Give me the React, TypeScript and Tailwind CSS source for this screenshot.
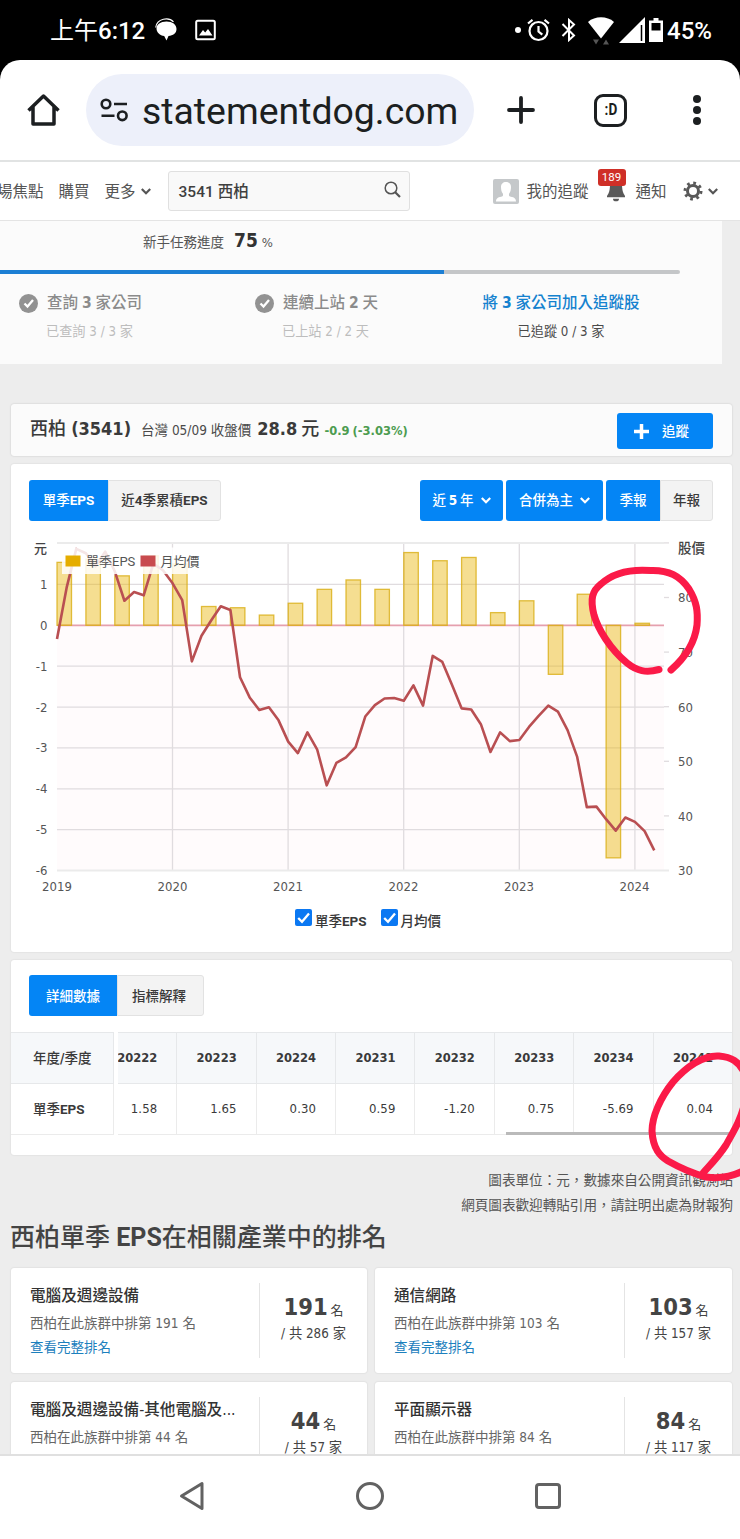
import { clsx } from "clsx";
import type { ReactNode } from "react";

type Quarter = { name: string; value: string };
type Ranking = { title: string; rank: number; total: number };

const ROBOTO = "font-['Roboto','Noto_Sans_CJK_TC',sans-serif] [font-stretch:normal]";

const QUARTERS: Quarter[] = [
  { name: "20222", value: "1.58" },
  { name: "20223", value: "1.65" },
  { name: "20224", value: "0.30" },
  { name: "20231", value: "0.59" },
  { name: "20232", value: "-1.20" },
  { name: "20233", value: "0.75" },
  { name: "20234", value: "-5.69" },
  { name: "20241", value: "0.04" }
];

const RANKINGS: Ranking[] = [
  { title: "電腦及週邊設備", rank: 191, total: 286 },
  { title: "通信網路", rank: 103, total: 157 },
  { title: "電腦及週邊設備-其他電腦及...", rank: 44, total: 57 },
  { title: "平面顯示器", rank: 84, total: 117 }
];

// Quarterly EPS, 2019Q1 to 2024Q1
const EPS = [
  1.54, 1.62, 1.21, 1.7, 1.5, 0.46, 0.43, 0.25, 0.54, 0.88, 1.11, 0.88, 1.78, 1.58, 1.66, 0.31, 0.6, -1.2, 0.76,
  -5.69, 0.05
];

// Monthly average price
const PRICE = [
  72.4, 81.8, 88.9, 88.1, 85.7, 88.4, 84.8, 79.4, 81, 80.4, 86.2, 85, 82.6, 79.5, 68.3, 73, 75.8, 78.4, 77.7, 65.4,
  61.7, 59.4, 59.9, 57.5, 53.6, 51.5, 55.3, 52.2, 45.6, 49.7, 50.7, 52.6, 58.2, 60.3, 61.5, 61.6, 61.1, 63.9, 60.2,
  69.3, 68.2, 64, 59.7, 59.5, 56.8, 51.7, 55.3, 53.7, 53.9, 56.3, 58.3, 60.2, 59.1, 55.7, 50.8, 41.6, 41.7, 39.4,
  37.3, 39.7, 38.9, 37.2, 33.7
];

const PLOT = { left: 46, right: 653, top: 13, bottom: 340.5, zero: 95.3 };
const EPS_STEP = 40.87;
const PRICE_STEP = 5.46;
const QUARTER_STEP = 28.9;
const YEARS = [2019, 2020, 2021, 2022, 2023, 2024];

const epsY = (value: number) => PLOT.zero - value * EPS_STEP;
const priceY = (value: number) => PLOT.bottom - (value - 30) * PRICE_STEP;

const StatusBar = () => (
  <div className={clsx("flex h-[60px] shrink-0 items-center bg-black pl-[50px] pr-[28px] text-[24px] font-medium text-white", ROBOTO)}>
    <span className="pt-[2px] whitespace-nowrap">
      <span className="font-normal">上午</span>6:12
    </span>
    <svg className="ml-[10px] h-[24px] w-[22px]" viewBox="0 0 22 24">
      <path d="M.700 9.500C2 0 14-1 18.500 3.800" stroke="#fff" strokeWidth="1.2" fill="none" />
      <path
        d="M11.500 3.500C17.500 3.500 21.500 6.500 21.500 11S18 17.600 13.500 18L11.500 22.500 9.200 18C5 17.500 1.500 14.500 1.500 10.500S5.500 3.500 11.500 3.500Z"
        fill="#fff"
      />
    </svg>
    <svg className="ml-[18px] h-[22px] w-[22px]" viewBox="0 0 22 22">
      <rect x="1.2" y="1.700" width="18.600" height="18.600" rx="1.500" fill="none" stroke="#fff" strokeWidth="2" />
      <path d="M4 16.500 8 11 10.200 13.500 13 10 17.500 16.500Z" fill="#fff" />
    </svg>
    <div className="ml-auto flex items-center">
      <span className="h-[6px] w-[6px] rounded-full bg-white" />
      <svg className="ml-[6px] h-[24px] w-[23px]" viewBox="0 0 23 24" fill="none" stroke="#fff" strokeWidth="2.2">
        <circle cx="11.500" cy="13" r="9" />
        <path d="M11.500 8v5.500l3.800 3.200M1 5.500 5.500 1.800M22 5.500 17.500 1.800" />
      </svg>
      <svg className="ml-[11px] h-[24px] w-[16px]" viewBox="0 0 16 24" fill="none" stroke="#fff" strokeWidth="2">
        <path d="M1.500 6 13 17.500 8 22V2l5 4.500L1.500 18" />
      </svg>
      <svg className="ml-[11px] h-[29px] w-[26px]" viewBox="0 0 26 29">
        <path d="M0 6C7-.2 19-.2 26 6L13 22.500Z" fill="#fff" />
        <path d="M5 23.500h6l-3 5zM15 28.500h6l-3-5z" fill="#555" />
      </svg>
      <svg className="ml-[5px] h-[26px] w-[26px]" viewBox="0 0 26 26">
        <path d="M26 0V26H0Z" fill="#fff" />
        <path d="M22.500 8v16" stroke="#000" strokeWidth="1.500" />
      </svg>
      <svg className="ml-[4px] h-[24px] w-[14px]" viewBox="0 0 14 24">
        <path d="M4.500 0h5v2.500H14V24H0V2.500h4.500z" fill="#fff" />
        <path d="M2.500 5h9v7.500h-9z" fill="#000" />
      </svg>
      <span className="ml-[4px] pt-[2px]">45%</span>
    </div>
  </div>
);

const BrowserBar = () => (
  <div className="shrink-0 bg-black">
    <div className={clsx("flex h-[102px] items-center rounded-t-[20px] border-b-2 border-[#e1e3e3] bg-white text-[#1c1f21]", ROBOTO)}>
      <svg className="ml-[27px] h-[34px] w-[33px]" viewBox="0 0 33 34" fill="none" stroke="currentColor" strokeWidth="3.500">
        <path d="M1.500 17.500 16.500 3 31.500 17.500M6 14v17h21V14" strokeLinejoin="round" />
      </svg>
      <div className="ml-[26px] flex h-[72px] w-[388px] items-center rounded-full bg-[#edf0fa] pl-[14px]">
        <svg className="h-[24px] w-[28px]" viewBox="0 0 28 24" fill="none" stroke="currentColor" strokeWidth="2.600">
          <circle cx="6" cy="6" r="4.300" />
          <circle cx="22.300" cy="17.800" r="4.300" />
          <path d="M14 6h13M1.500 17.800h13" />
        </svg>
        <span className="mt-[4px] ml-[14px] whitespace-nowrap text-[37.400px] leading-none">statementdog.com</span>
      </div>
      <svg className="ml-[33px] h-[28px] w-[28px]" viewBox="0 0 28 28" stroke="currentColor" strokeWidth="3.800" strokeLinecap="round">
        <path d="M14 2v24M2 14h24" />
      </svg>
      <div className="ml-[59px] flex h-[33px] w-[33px] items-center justify-center rounded-[9px] border-[3.500px] border-current text-[17px] font-bold">
        <span className="scale-x-80">:D</span>
      </div>
      <div className="ml-[66px] flex flex-col gap-[3.500px]">
        <span className="h-[7.500px] w-[7.500px] rounded-full bg-current" />
        <span className="h-[7.500px] w-[7.500px] rounded-full bg-current" />
        <span className="h-[7.500px] w-[7.500px] rounded-full bg-current" />
      </div>
    </div>
  </div>
);

const Chevron = ({ className }: { className?: string }) => (
  <svg className={clsx("h-[7px] w-[10px]", className)} viewBox="0 0 10 7" fill="none" stroke="currentColor" strokeWidth="2.200">
    <path d="M.800 1 5 5.200 9.200 1" />
  </svg>
);

const SiteNav = () => (
  <nav className="flex h-[59px] shrink-0 items-center border-b border-[#e4e4e4] bg-white text-[15.500px] whitespace-nowrap text-[#555]">
    <span className="mt-[3px] -ml-[3px]">場焦點</span>
    <span className="mt-[3px] ml-[15px]">購買</span>
    <span className="mt-[3px] ml-[15px]">更多</span>
    <Chevron className="ml-[5px]" />
    <div className={clsx("ml-[17px] flex h-[40px] w-[242px] items-center justify-between rounded-[3px] border border-[#e0e0e0] bg-[#f9f9f9] pl-[10px] pr-[8px] font-medium text-[#3f3f3f]", ROBOTO)}>
      <span className="mt-[3px]">3541 西柏</span>
      <svg className="-mt-[3px] h-[17px] w-[17px]" viewBox="0 0 17 17" fill="none" stroke="#555" strokeWidth="1.500">
        <circle cx="7" cy="7" r="5.800" />
        <path d="m11 11 5 5" strokeWidth="2.200" />
      </svg>
    </div>
    <svg className="ml-[83px] h-[25px] w-[26px]" viewBox="0 0 26 25">
      <rect width="26" height="25" rx="2" fill="#c5c8ca" />
      <path d="M3 22.500c0-4 3-4.200 6.500-5.300.6-.3.700-1.800.3-2.700C8.500 13 8 10.500 8 8c0-3 2-5 5-5s5 2 5 5c0 2.500-.500 5-1.800 6.500-.4.900-.3 2.400.3 2.700 3.500 1.100 6.500 1.300 6.500 5.300z" fill="#fff" />
    </svg>
    <span className="mt-[3px] ml-[8px]">我的追蹤</span>
    <div className="relative ml-[17px] h-[26px] w-[20px]">
      <svg className="absolute top-[4px] left-0 h-[20px] w-[20px]" viewBox="0 0 20 20" fill="#595959">
        <path d="M4 2h12c0 6 1 9 3 12v1.300H1V14C3 11 4 8 4 2zM7 16.700h6a3 2.600 0 0 1-6 0z" />
      </svg>
      <span className={clsx("absolute -top-[9px] -left-[8px] flex h-[17px] w-[28px] items-center justify-center rounded-[3px] bg-[#cf2f27] text-[11.500px] text-white", ROBOTO)}>
        189
      </span>
    </div>
    <span className="mt-[3px] ml-[10px]">通知</span>
    <svg className="ml-[16px] h-[20px] w-[20px]" viewBox="0 0 20 20" fill="none" stroke="#595959">
      <circle cx="10" cy="10" r="5.500" strokeWidth="3" />
      <circle cx="10" cy="10" r="8" strokeWidth="3" strokeDasharray="2.700 3.583" />
    </svg>
    <Chevron className="ml-[5px]" />
  </nav>
);

const DoneTask = ({ title, note }: { title: ReactNode; note: string }) => (
  <div className="w-[236px]">
    <div className="flex items-center text-[15.500px] leading-[22px] font-medium [word-spacing:-0.500px] text-[#8b8b8b]">
      <svg className="mt-[1px] mr-[9px] h-[19px] w-[19px]" viewBox="0 0 19 19">
        <circle cx="9.500" cy="9.500" r="9.500" fill="#929292" />
        <path d="m5.500 9.500 3 3 5.500-6.500" fill="none" stroke="#fff" strokeWidth="2.300" />
      </svg>
      {title}
    </div>
    <div className="mt-[9px] ml-[27px] text-[13.200px] leading-[18px] text-[#bdbdbd]">{note}</div>
  </div>
);

const BeginnerProgress = () => (
  <section className="h-[143px] w-[722px] bg-[#fbfbfb]">
    <div className="flex h-[49px] items-baseline pt-[7px] pl-[143px] text-[13.500px] text-[#555]">
      新手任務進度
      <b className="ml-[10px] text-[19px] leading-[24px] text-[#333]">75</b>
      <span className="ml-[4px] text-[13px]">%</span>
    </div>
    <div className="h-[4px] w-[680px] rounded-r-full bg-[#c4c6c8]">
      <div className="h-full w-[444px] bg-[#1c7fd4]" />
    </div>
    <div className="flex pt-[18px] pl-[19px]">
      <DoneTask title={<span>查詢 <b>3</b> 家公司</span>} note="已查詢 3 / 3 家" />
      <DoneTask title={<span>連續上站 <b>2</b> 天</span>} note="已上站 2 / 2 天" />
      <div className="ml-[-48px] w-[236px] text-center whitespace-nowrap">
        <div className="text-[15.500px] leading-[22px] font-medium [word-spacing:-0.500px] text-[#1582cf]">
          將 <b>3</b> 家公司加入追蹤股
        </div>
        <div className="mt-[9px] text-[13.200px] leading-[18px] text-[#4a4a4a]">已追蹤 0 / 3 家</div>
      </div>
    </div>
  </section>
);

const StockHeader = () => (
  <section className="mt-[40px] flex h-[52px] w-[721px] items-center rounded-[3px] bg-[#fbfbfb] pr-[19px] pl-[19px] whitespace-nowrap text-[#3a3a3a] shadow-[0_0_2px_rgba(0,0,0,0.18)]">
    <div className="-mt-[4px] flex items-baseline">
      <span className="text-[18px] font-medium">
        西柏 <b>(3541)</b>
      </span>
      <span className="ml-[10px] text-[13.500px] text-[#4a4a4a]">台灣 05/09 收盤價</span>
      <span className="ml-[6px] text-[18px] font-medium [word-spacing:-1px]">
        <b>28.8</b> 元
      </span>
      <b className="ml-[5px] text-[12.800px] [word-spacing:-1px] text-[#4c9c50]">-0.9 (-3.03%)</b>
    </div>
    <button type="button" className="mt-[2px] ml-auto flex h-[36px] w-[96px] items-center rounded-[3px] bg-[#0485f5] pl-[17px] text-[13.500px] font-medium text-white">
      <svg className="mr-[13px] h-[15px] w-[15px]" viewBox="0 0 15 15" stroke="#fff" strokeWidth="3.500">
        <path d="M7.500 0v15M0 7.500h15" />
      </svg>
      追蹤
    </button>
  </section>
);

const Tab = ({ active, className, children }: { active?: boolean; className?: string; children: ReactNode }) => (
  <button
    type="button"
    className={clsx(
      "flex h-[41px] items-center justify-center pt-px text-[13.500px] font-medium whitespace-nowrap",
      active ? "bg-[#0485f5] text-white" : "border border-[#e2e2e2] bg-[#f3f3f3] text-[#3a3a3a]",
      className
    )}
  >
    {children}
  </button>
);

const EpsChart = () => (
  <svg className="block h-[370px] w-[721px]" viewBox="0 0 721 370">
    <rect x={PLOT.left} y={PLOT.zero} width={PLOT.right - PLOT.left} height={PLOT.bottom - PLOT.zero} fill="#fffbfc" />
    <g stroke="#e0dcdf" strokeWidth="1.300">
      {[1, -1, -2, -3, -4, -5].map((value) => (
        <path key={value} d={`M${PLOT.left} ${epsY(value)}H${PLOT.right}`} />
      ))}
      {YEARS.slice(1).map((year, i) => (
        <path key={year} d={`M${161.5 + i * 115.6} ${PLOT.top}V${PLOT.bottom}`} />
      ))}
      <path d={`M${PLOT.left} ${PLOT.top}H${PLOT.right}M${PLOT.left} ${PLOT.bottom}H${PLOT.right + 5}`} strokeWidth="2" stroke="#ebebeb" />
      {[40, 50, 60, 70, 80, 90].map((value) => (
        <path key={value} d={`M${PLOT.right} ${priceY(value)}h5`} />
      ))}
    </g>
    <path d={`M${PLOT.left} ${PLOT.zero}H${PLOT.right}`} stroke="#e5a0ae" strokeWidth="1.800" />
    <g fill="#e8b60c" fillOpacity="0.450" stroke="#d9ae14" strokeOpacity="0.800" strokeWidth="1.300">
      {EPS.map((value, i) => (
        <rect
          key={i}
          x={PLOT.left + i * QUARTER_STEP}
          y={Math.min(PLOT.zero, epsY(value))}
          width="14.500"
          height={Math.abs(value) * EPS_STEP}
        />
      ))}
    </g>
    <polyline
      points={PRICE.map((value, i) => `${PLOT.left + i * 9.633},${priceY(value)}`).join(" ")}
      fill="none"
      stroke="#b94f52"
      strokeWidth="2.600"
      strokeLinejoin="round"
    />
    <rect x="51" y="17.500" width="143" height="26.500" fill="#fff" fillOpacity="0.850" />
    <rect x="54.500" y="25.500" width="15" height="11" fill="#e5ad00" />
    <rect x="129.500" y="25.500" width="15" height="11" fill="#c84b4e" />
    <g className={ROBOTO} fontSize="13" fill="#555">
      <text x="75" y="36">單季EPS</text>
      <text x="149.500" y="36">月均價</text>
    </g>
    <g fontSize="13" fontWeight="500" fill="#444">
      <text x="23" y="23">元</text>
      <text x="667" y="23" fontSize="13.500">股價</text>
    </g>
    <g fontSize="13" fill="#555">
      {[1, 0, -1, -2, -3, -4, -5, -6].map((value) => (
        <text key={value} x="36.500" y={epsY(value) + 4.5} textAnchor="end">
          {value}
        </text>
      ))}
      {[30, 40, 50, 60, 70, 80].map((value) => (
        <text key={value} x="667" y={priceY(value) + 4.8}>
          {value}
        </text>
      ))}
      {YEARS.map((year, i) => (
        <text key={year} x={46 + i * 115.5} y="361.200" textAnchor="middle">
          {year}
        </text>
      ))}
    </g>
  </svg>
);

const SeriesToggle = ({ children }: { children: ReactNode }) => (
  <label className="flex items-end">
    <svg className="mr-[3px] mb-[5px] h-[17px] w-[17px]" viewBox="0 0 17 17">
      <rect width="17" height="17" rx="2" fill="#0b78f2" />
      <path d="m3.200 9 3.800 3.800L14 4.500" fill="none" stroke="#fff" strokeWidth="2.300" />
    </svg>
    {children}
  </label>
);

const ChartCard = () => (
  <section className="mt-[8px] flex h-[488px] w-[721px] flex-col rounded-[3px] bg-white pt-[15.500px] shadow-[0_0_2px_rgba(0,0,0,0.12)]">
    <div className="flex pr-[19px] pl-[18px]">
      <Tab active className={clsx("w-[79px] rounded-l-[3px]", ROBOTO)}>
        <span>單季<b>EPS</b></span>
      </Tab>
      <Tab className={clsx("w-[113px] rounded-r-[3px]", ROBOTO)}>
        <span>近<b>4</b>季累積<b>EPS</b></span>
      </Tab>
      <Tab active className="ml-auto w-[83px] rounded-[3px]">
        <span className="[word-spacing:-1px]">近 <b>5</b> 年</span>
        <Chevron className="ml-[7px]" />
      </Tab>
      <Tab active className="ml-[3px] w-[97px] rounded-[3px]">
        合併為主
        <Chevron className="ml-[7px]" />
      </Tab>
      <Tab active className="ml-[3px] w-[54px] rounded-l-[3px]">季報</Tab>
      <Tab className="w-[53px] rounded-r-[3px]">年報</Tab>
    </div>
    <div className="mt-[9.500px]">
      <EpsChart />
    </div>
    <div className={clsx("mt-[9px] flex justify-start gap-[14px] pl-[284px] text-[13.500px] leading-[20px] font-medium text-[#3a3a3a]", ROBOTO)}>
      <SeriesToggle><span>單季<b>EPS</b></span></SeriesToggle>
      <SeriesToggle>月均價</SeriesToggle>
    </div>
  </section>
);

const DetailTable = () => (
  <section className="mt-[8px] h-[195px] w-[721px] rounded-[3px] bg-white pt-[15px] shadow-[0_0_2px_rgba(0,0,0,0.12)]">
    <div className="flex pl-[18px]">
      <Tab active className="w-[88px] rounded-l-[3px]">詳細數據</Tab>
      <Tab className="w-[87px] rounded-r-[3px] pr-[3px]">指標解釋</Tab>
    </div>
    <div className="mt-[16px] flex gap-[4px] text-[13px] text-[#3a3a3a]">
      <div className="w-[103px] shrink-0 font-medium">
        <div className="flex h-[52px] items-center border-y border-r border-[#e6e8ea] bg-[#f6f8fa] pl-[22px] text-[13.500px]">
          <span>年度<b>/</b>季度</span>
        </div>
        <div className={clsx("flex h-[51px] items-center border-r border-b border-[#ebebeb] pl-[22px] text-[13.500px]", ROBOTO)}>
          <span>單季<b>EPS</b></span>
        </div>
      </div>
      <div className="relative flex min-w-0 flex-1 justify-end overflow-hidden">
        {QUARTERS.map((quarter, i) => (
          <div key={quarter.name} className={clsx("w-[79.400px] shrink-0", i > 0 && "[&>*]:border-l")}>
            <div className="flex h-[52px] items-center justify-end border-y border-[#e6e8ea] bg-[#f6f8fa] pr-[19px] text-[12.800px] font-bold">
              {quarter.name}
            </div>
            <div className="flex h-[51px] items-center justify-end border-b border-[#ebebeb] pr-[19px] tracking-[0.1px]">{quarter.value}</div>
          </div>
        ))}
        <span className="absolute right-0 bottom-0 h-[3px] w-[226px] bg-[#bababa]" />
      </div>
    </div>
  </section>
);

const RankingCard = ({ title, rank, total }: Ranking) => (
  <div className="flex h-[105px] items-center rounded-[3px] bg-white pl-[19px] text-[13.500px] shadow-[0_0_2px_rgba(0,0,0,0.14)]">
    <div className="flex-1 whitespace-nowrap text-[#666]">
      <div className="pt-[4px] text-[15.600px] leading-[24px] font-medium text-[#333]">{title}</div>
      <div className="mt-[3px] leading-[24px]">西柏在此族群中排第 {rank} 名</div>
      <div className="pb-[2px] leading-[24px] text-[#1c80bd]">查看完整排名</div>
    </div>
    <div className="h-[75px] w-[108px] border-l border-[#e4e4e4] pt-[10px] text-center text-[#444]">
      <div className="leading-[28px]">
        <b className="text-[23.500px]">{rank}</b> <span className="-ml-px text-[13px]">名</span>
      </div>
      <div className="-mt-[3px] text-[13.300px] leading-[24px]">/ 共 {total} 家</div>
    </div>
  </div>
);

const SystemNav = () => (
  <div className="flex h-[85px] shrink-0 items-center border-t-2 border-[#e0e0e0] bg-white pb-[4px] pl-[179px]">
    <svg className="h-[30px] w-[27px]" viewBox="0 0 27 30" fill="none" stroke="#626262" strokeWidth="3" strokeLinejoin="round">
      <path d="M23 2.500v25L2.500 15Z" />
    </svg>
    <span className="ml-[150px] h-[28px] w-[28px] rounded-full border-[3px] border-[#626262]" />
    <span className="ml-[151px] h-[26px] w-[26px] rounded-[4px] border-[3px] border-[#626262]" />
  </div>
);

// Red pen marks around the latest quarter
const PenMarks = () => (
  <svg className="pointer-events-none absolute inset-0 h-[1539px] w-[740px]" viewBox="0 0 740 1539" fill="none" stroke="#fb1a48" strokeWidth="7" strokeLinecap="round" strokeLinejoin="round">
    <path d="M659 669.500C646 673 637 671 627 663C610 649 598 629 594 615C590 599 592 591 601 584C614 572 632 569 651 570.500C669 570 680 576 689 589C697 602 698 612 697 625C695 642 687 656 671 670" />
    <path d="M745 1074C739 1061 731 1057 719 1056C703 1055 686 1067 673 1082C660 1098 652 1117 652 1131C653 1149 660 1156 668 1161C682 1169 695 1174 706 1177C720 1179 732 1177 745 1170M745 1102C741 1119 735 1129 726 1145C719 1156 712 1163 703 1173" />
  </svg>
);

export default function App() {
  return (
    <div className="relative flex h-[1539px] w-[740px] flex-col overflow-hidden bg-[#ededed] font-['DejaVu_Sans_Condensed','DejaVu_Sans','Noto_Sans_CJK_TC',sans-serif] [font-stretch:condensed]">
      <StatusBar />
      <BrowserBar />
      <SiteNav />
      <main className="h-[1233px] shrink-0 overflow-hidden">
        <BeginnerProgress />
        <div className="pl-[11px]">
          <StockHeader />
          <ChartCard />
          <DetailTable />
          <p className="mt-[13px] pr-[7px] text-right text-[13.600px] leading-[24.500px] text-[#555]">
            圖表單位：元，數據來自公開資訊觀測站
            <br />
            網頁圖表歡迎轉貼引用，請註明出處為財報狗
          </p>
          <h2 className={clsx("mt-[4px] -ml-px text-[25px] leading-[34px] font-medium whitespace-nowrap text-[#444]", ROBOTO)}>
            西柏單季 <b>EPS</b>在相關產業中的排名
          </h2>
          <div className="mt-[13px] grid grid-cols-[356px_357px] gap-x-[8px] gap-y-[9px]">
            {RANKINGS.map((ranking) => (
              <RankingCard key={ranking.title} {...ranking} />
            ))}
          </div>
        </div>
      </main>
      <SystemNav />
      <PenMarks />
    </div>
  );
}
